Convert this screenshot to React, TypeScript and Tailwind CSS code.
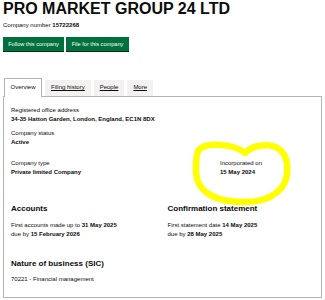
const font = { fontFamily: '"Liberation Sans", Arial, sans-serif' };

const Field = ({ label, value, className = "" }: { label: string; value: string; className?: string }) => (
  <div className={className}>
    <p className="text-[6px] leading-[9px]">{label}</p>
    <p className="text-[6px] leading-[9px] font-bold">{value}</p>
  </div>
);

const Tab = ({ label }: { label: string }) => (
  <li className="h-[16px] bg-[#f3f2f1] px-[6px] flex items-center">
    <a className="text-[6px] leading-[9px] underline text-[#0b0c0c]">{label}</a>
  </li>
);

export default function App() {
  return (
    <div className="relative w-[325px] h-[300px] bg-white text-[#0b0c0c] overflow-hidden" style={font}>
      <div className="px-[3px]">
        <h1 className="text-[16px] leading-[18px] font-bold">PRO MARKET GROUP 24 LTD</h1>
        <p className="mt-[2.5px] text-[6px] leading-[9px]">
          Company number <span className="font-bold">15722268</span>
        </p>
        <div className="mt-[7.5px] flex gap-[2px]">
          <button className="h-[14px] w-[61px] bg-[#00703c] text-white text-[5.6px] shadow-[0_1px_0_#002d18]">
            Follow this company
          </button>
          <button className="h-[14px] w-[63px] bg-[#00703c] text-white text-[5.6px] shadow-[0_1px_0_#002d18]">
            File for this company
          </button>
        </div>

        <ul className="mt-[26.5px] ml-[1px] flex items-end gap-[3px] relative z-10">
          <li className="h-[19px] w-[38px] bg-white border border-b-0 border-[#b1b4b6] flex items-center justify-center -mb-px pb-px">
            <span className="text-[6px] leading-[9px]">Overview</span>
          </li>
          <Tab label="Filing history" />
          <Tab label="People" />
          <Tab label="More" />
        </ul>

        <div className="w-[319px] h-[202px] border border-[#b1b4b6] px-[7px] pt-[9px]">
          <Field label="Registered office address" value="34-35 Hatton Garden, London, England, EC1N 8DX" />
          <Field className="mt-[5.5px]" label="Company status" value="Active" />
          <div className="mt-[12px] flex">
            <Field className="w-[209px]" label="Company type" value="Private limited Company" />
            <Field label="Incorporated on" value="15 May 2024" />
          </div>

          <div className="mt-[27px] grid grid-cols-2 gap-x-[10px]">
            <div>
              <h2 className="text-[8px] leading-[10px] font-bold">Accounts</h2>
              <p className="mt-[7px] text-[6px] leading-[9px]">
                First accounts made up to <span className="font-bold">31 May 2025</span>
              </p>
              <p className="text-[6px] leading-[9px]">
                due by <span className="font-bold">15 February 2026</span>
              </p>
            </div>
            <div>
              <h2 className="text-[8px] leading-[10px] font-bold">Confirmation statement</h2>
              <p className="mt-[7px] text-[6px] leading-[9px]">
                First statement date <span className="font-bold">14 May 2025</span>
              </p>
              <p className="text-[6px] leading-[9px]">
                due by <span className="font-bold">28 May 2025</span>
              </p>
            </div>
          </div>

          <h2 className="mt-[20px] text-[8px] leading-[10px] font-bold">Nature of business (SIC)</h2>
          <p className="mt-[6px] text-[6px] leading-[9px]">70221 - Financial management</p>
        </div>
      </div>

      {/* hand-drawn highlight */}
      <svg className="absolute inset-0 pointer-events-none" width="325" height="300" viewBox="0 0 325 300">
        <path
          d="M198 151 C204 141 234 144 245 153 C256 142 284 140 287 164 C290 190 270 202 245 202 C214 202 195 192 196 168 C196 161 196 156 198 151"
          fill="none"
          stroke="#ffff00"
          strokeWidth="6.5"
          strokeLinecap="round"
          strokeLinejoin="round"
        />
      </svg>
    </div>
  );
}
